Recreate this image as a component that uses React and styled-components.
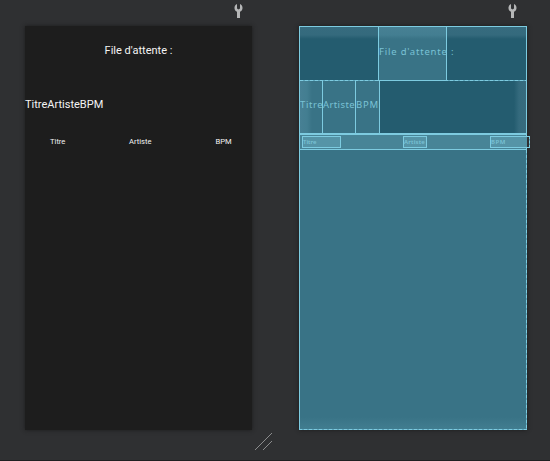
import React from "react";
import styled, { createGlobalStyle } from "styled-components";

const line = "#7dcbe0";
const dash = `repeating-linear-gradient(90deg, ${line} 0 3px, #5fa9bf 3px 5px)`;
const dashV = `repeating-linear-gradient(180deg, ${line} 0 3px, #5fa9bf 3px 5px)`;

const GlobalStyle = createGlobalStyle`
  * { box-sizing: border-box; }
  body { margin: 0; background: #2f3032; overflow: hidden; }
`;

const Editor = styled.main`
  width: 550px;
  height: 461px;
  display: grid;
  grid-template-columns: 228px 228px;
  grid-template-rows: 26px 404px 30px;
  column-gap: 46px;
  padding-left: 25px;
  background: #2f3032;
  border-bottom: 1px solid #1f2021;
`;

const Toolbar = styled.div`
  display: flex;
  justify-content: flex-end;
  padding: 4px ${(p) => p.$inset}px 0 0;
  svg { display: block; }
`;

const Preview = styled.section`
  width: 227px;
  background: #1d1d1d;
  box-shadow: 0 0 4px #1b1b1c;
  color: #f4f4f4;
  font-family: Roboto, sans-serif;
`;

const PreviewTitle = styled.h1`
  margin: 0;
  height: 54px;
  padding-top: 18px;
  font-size: 11px;
  line-height: 13px;
  font-weight: 400;
  text-align: center;
  white-space: pre;
`;

const PreviewHeadings = styled.div`
  display: flex;
  height: 54px;
  padding-top: 18px;
  font-size: 11px;
  line-height: 13px;
`;

const PreviewColumns = styled.div`
  display: flex;
  height: 16px;
  padding: 3px 0 0 25px;
  font-size: 7.6px;
  line-height: 10px;
`;

const PreviewLabel = styled.span`
  flex: none;
  width: ${(p) => p.$width}px;
`;

const Blueprint = styled.section`
  width: 228px;
  height: 404px;
  display: flex;
  flex-direction: column;
  border: 1px solid ${line};
  color: #79c2d5;
  background: linear-gradient(0deg, #47849699, #39738600 12px), #397386;
  box-shadow: 0 0 4px #1b1b1c;
  font-family: "DejaVu Sans", sans-serif;
`;

const TitleRow = styled.div`
  flex: none;
  display: flex;
  height: 54px;
  padding-left: 78px;
  background: ${dash} bottom / 100% 1px no-repeat,
    linear-gradient(180deg, #376b7e 0, #346a7d 8px, #245c6f 12px);
`;

const TitleCell = styled.div`
  width: 69px;
  height: 54px;
  padding-top: 18px;
  border: solid ${line};
  border-width: 0 1px 1px;
  background: linear-gradient(180deg, #478094 0, #437e91 8px, #397386 12px);
  font-family: "Noto Sans", sans-serif;
  font-size: 9.5px;
  line-height: 13px;
  letter-spacing: 0.8px;
  white-space: nowrap;
`;

const HeadingRow = styled.div`
  flex: none;
  display: flex;
  height: 54px;
  border-bottom: 2px solid ${line};
  background: linear-gradient(270deg, #376b7e 0, #346a7d 7px, #245c6f 12px);
`;

const HeadingCell = styled.div`
  width: ${(p) => p.$width}px;
  padding-top: 17px;
  border-right: 1px solid ${line};
  background: ${(p) => p.$edge
    ? "linear-gradient(90deg, #478094, #437e91 7px, #397386 12px)"
    : "#397386"};
  font-family: "Noto Sans", sans-serif;
  font-size: 9.5px;
  line-height: 13px;
  letter-spacing: ${(p) => p.$spacing}px;
  white-space: nowrap;
`;

const ColumnRow = styled.div`
  flex: none;
  display: flex;
  height: 15px;
  padding: 1px 0 0 2px;
  border-bottom: 1px solid ${line};
  background: #478497;
`;

const ColumnCell = styled.div`
  flex: none;
  width: ${(p) => p.$width}px;
  height: 12px;
  margin-right: ${(p) => p.$gap || 0}px;
  border: 1px solid ${line};
  border-right-style: ${(p) => (p.$overflow ? "dashed" : "solid")};
  background: ${(p) => p.$overflow
    ? "linear-gradient(90deg, #5594a7 36px, #2f3032 36px)"
    : "#5594a7"};
  font-family: "Noto Sans", sans-serif;
  font-size: 6px;
  font-weight: 600;
  line-height: 10px;
  letter-spacing: ${(p) => p.$spacing}px;
`;

const Bounds = styled.div`
  flex: 1;
  margin: 0 -1px -1px;
  background: ${dash} bottom / 100% 1px no-repeat,
    ${dashV} right / 1px 100% no-repeat;
`;

const Footer = styled.footer`
  grid-column: 1 / 3;
  padding: 3px 0 0 230px;
  svg { display: block; }
`;

function Wrench() {
  return (
    <svg width="9" height="14" viewBox="0 0 9 14" fill="#b5b6b7">
      <path d="M3 .1V4.5L4.5 5.4 6 4.5V.1C7.8.8 8.7 2.5 8.5 4.3 8.4 6 7.4 7.2 6 7.8V14H3V7.8C1.6 7.2.6 6 .5 4.3.3 2.5 1.2.8 3 .1Z" />
    </svg>
  );
}

export default function App() {
  return (
    <>
      <GlobalStyle />
      <Editor>
        <Toolbar $inset={10}><Wrench /></Toolbar>
        <Toolbar $inset={10}><Wrench /></Toolbar>
        <Preview>
          <PreviewTitle>File d'attente :</PreviewTitle>
          <PreviewHeadings>
            <span>Titre</span><span>Artiste</span><span>BPM</span>
          </PreviewHeadings>
          <PreviewColumns>
            <PreviewLabel $width={79}>Titre</PreviewLabel>
            <PreviewLabel $width={86.5}>Artiste</PreviewLabel>
            <PreviewLabel $width={30}>BPM</PreviewLabel>
          </PreviewColumns>
        </Preview>
        <Blueprint>
          <TitleRow><TitleCell>File d'attente :</TitleCell></TitleRow>
          <HeadingRow>
            <HeadingCell $width={23} $edge $spacing={0.6}>Titre</HeadingCell>
            <HeadingCell $width={33} $spacing={0.4}>Artiste</HeadingCell>
            <HeadingCell $width={24} $spacing={0.8}>BPM</HeadingCell>
          </HeadingRow>
          <ColumnRow>
            <ColumnCell $width={39} $gap={62} $spacing={0}>Titre</ColumnCell>
            <ColumnCell $width={24} $gap={63} $spacing={0.2}>Artiste</ColumnCell>
            <ColumnCell $width={40} $overflow $spacing={0.5}>BPM</ColumnCell>
          </ColumnRow>
          <Bounds />
        </Blueprint>
        <Footer>
          <svg width="18" height="18" viewBox="0 0 18 18" stroke="#8b8c8d" strokeWidth="1" shapeRendering="crispEdges">
            <path d="M0 17 17 0M8 17 17 8" />
          </svg>
        </Footer>
      </Editor>
    </>
  );
}
